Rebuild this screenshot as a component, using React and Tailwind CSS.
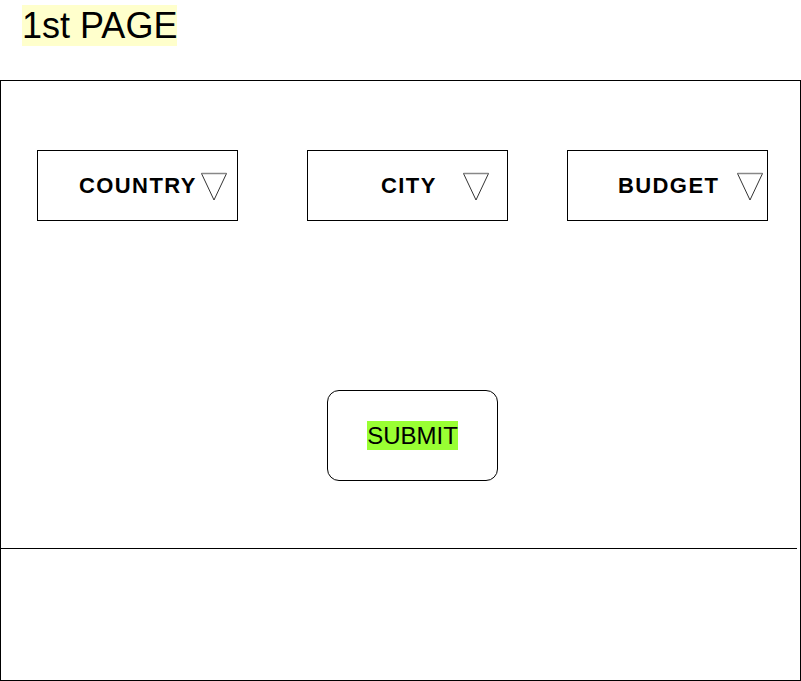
function Arrow() {
  return (
    <svg width="28" height="30" viewBox="0 0 28 30" className="shrink-0 mt-[2px]">
      <polygon
        points="1.5,1.5 26.5,1.5 14,28"
        fill="none"
        stroke="#333"
        strokeWidth="1"
      />
      <line x1="1.5" y1="1.5" x2="26.5" y2="1.5" stroke="#888" strokeWidth="1.5" />
    </svg>
  );
}

function Dropdown({ label, pad, gap }) {
  return (
    <div className={`flex items-center w-[201px] h-[71px] border border-black ${pad}`}>
      <span className={`text-[22px] font-bold tracking-[1.4px] text-black ${gap}`}>
        {label}
      </span>
      <Arrow />
    </div>
  );
}

export default function App() {
  return (
    <div className="w-[801px] h-[681px] bg-white font-['Liberation_Sans',Arial,sans-serif] overflow-hidden">
      <div className="h-[80px] pl-[22px] pt-[6px]">
        <span className="bg-[#ffffcc] text-[36px] leading-[40px] text-black">
          1st PAGE
        </span>
      </div>

      <div className="w-[801px] h-[601px] border border-black flex flex-col">
        <div className="h-[467px] pt-[69px]">
          <div className="flex pl-[36px]">
            <Dropdown label="COUNTRY" pad="pl-[41px]" gap="mr-[3px]" />
            <div className="w-[69px]" />
            <Dropdown label="CITY" pad="pl-[73px]" gap="mr-[25px]" />
            <div className="w-[59px]" />
            <Dropdown label="BUDGET" pad="pl-[50px]" gap="mr-[17px]" />
          </div>

          <div className="mt-[169px] ml-[326px] w-[171px] h-[91px] border border-black rounded-[12px] flex items-center justify-center">
            <span className="bg-[#99ff33] text-[24px] leading-[29px] text-black">
              SUBMIT
            </span>
          </div>
        </div>
        <div className="w-[797px] -ml-px border-t border-black" />
      </div>
    </div>
  );
}
